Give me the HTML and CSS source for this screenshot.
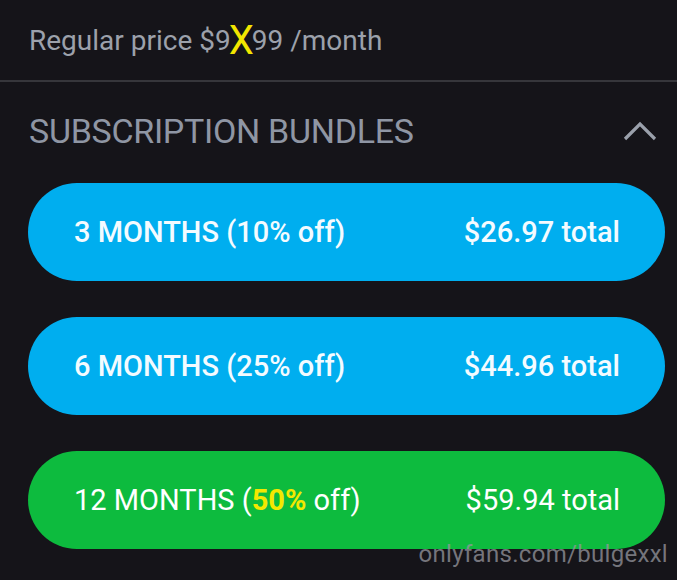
FILE: index.html
```html
<html>
<head>
	<meta name="viewport" content="width=device-width, user-scalable=no"/>
	<title>Subscription bundles</title>
	<link rel="stylesheet" href="styles.css">
</head>
<body>
	<div class="price">Regular price $9<span class="cross">X</span>99 /month</div>

	<div class="bundles-head">
		<span class="bundles-title">SUBSCRIPTION BUNDLES</span>
		<svg class="chevron" width="34" height="20" viewBox="0 0 34 20">
			<polyline points="2,18 17,3 32,18" fill="none" stroke="#9aa0ab" stroke-width="3.2"/>
		</svg>
	</div>

	<div class="bundles">
		<div class="bundle blue">
			<span class="label">3 MONTHS (10% off)</span>
			<span class="total">$26.97 total</span>
		</div>
		<div class="bundle blue">
			<span class="label">6 MONTHS (25% off)</span>
			<span class="total">$44.96 total</span>
		</div>
		<div class="bundle green">
			<span class="label">12 MONTHS (<b class="hot">50%</b> off)</span>
			<span class="total">$59.94 total</span>
		</div>
	</div>

	<div class="mark">onlyfans.com/bulgexxl</div>
</body>
</html>
```

FILE: styles.css
```css
body{
	margin: 0px;
	background-color: #151419;
	font-family: Roboto, "Liberation Sans", sans-serif;
	position: relative;
	height: 580px;
	overflow: hidden;
}
/* top line with the old price */
.price{
	height: 80px;
	display: flex;
	align-items: center;
	padding-left: 29px;
	font-size: 28px;
	color: #9ca1ab;
	border-bottom: 2px solid #36363b;
}
.cross{
	color: #f2e600;
	font-size: 40px;
	font-weight: 400;
	margin: 0 -2px 0 -2px;
	line-height: 28px;
	position: relative;
	top: 1px;
}
/* section header */
.bundles-head{
	height: 98px;
	display: flex;
	align-items: center;
	justify-content: space-between;
	padding: 0 20px 0 29px;
}
.bundles-title{
	font-size: 34px;
	color: #8f96a4;
	letter-spacing: -0.3px;
}
.chevron{
	display: block;
}
/* bundle buttons */
.bundles{
	display: flex;
	flex-direction: column;
	gap: 36px;
	padding: 3px 12px 0 28px;
}
.bundle{
	height: 98px;
	border-radius: 49px;
	display: flex;
	align-items: center;
	justify-content: space-between;
	padding: 0 45px 0 46px;
	color: #f4fbff;
	font-size: 29px;
	font-weight: 500;
}
.blue{ background-color: #00aeef; }
.green{
	background-color: #0dbb3e;
	font-weight: 400;
	color: #ffffff;
}
.hot{
	color: #f3e800;
	font-weight: bold;
}
.mark{
	position: absolute;
	right: 9px;
	top: 540px;
	font-size: 24px;
	color: rgba(150,150,158,0.75);
	letter-spacing: 0.3px;
}
```
